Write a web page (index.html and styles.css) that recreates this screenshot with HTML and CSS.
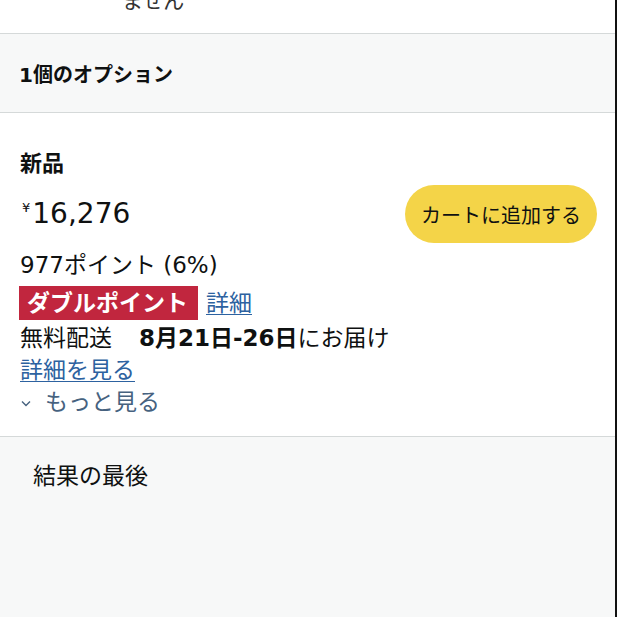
FILE: index.html
```html
<!DOCTYPE html>
<html lang="ja">
  <head>
    <meta charset="UTF-8" />
    <meta name="viewport" content="width=device-width, initial-scale=1.0" />
    <title>1個のオプション</title>
    <link rel="stylesheet" href="styles.css">
  </head>
  <body>
    <div class="page">
      <div class="prev-note">ません</div>

      <div class="options-head">1個のオプション</div>

      <div class="offer">
        <div class="condition">新品</div>
        <div class="price-row">
          <div class="price"><span class="yen">¥</span>16,276</div>
          <button class="cart-btn">カートに追加する</button>
        </div>
        <div class="points">977ポイント (6%)</div>
        <div class="badge-row">
          <span class="badge">ダブルポイント</span>
          <a href="#" class="link">詳細</a>
        </div>
        <div class="delivery">無料配送　<b>8月21日-26日</b>にお届け</div>
        <div class="line"><a href="#" class="link">詳細を見る</a></div>
        <div class="line more">
          <svg class="chev" width="10" height="7" viewBox="0 0 10 7">
            <path d="M1 1.5 L5 5.5 L9 1.5" fill="none" stroke="#46627f" stroke-width="1.4" />
          </svg>
          もっと見る
        </div>
      </div>

      <div class="results-end">結果の最後</div>
    </div>
  </body>
</html>
```

FILE: styles.css
```css
html,
body {
  margin: 0;
  height: 100%;
}
body {
  font-family: "DejaVu Sans", "Noto Sans CJK JP", sans-serif;
  color: #0f1111;
  background: #f7f8f8;
  overflow: hidden;
}
.page {
  display: flex;
  flex-direction: column;
  min-height: 100%;
  border-right: 2px solid #111;
  box-sizing: border-box;
}
.prev-note {
  background: #fff;
  margin-top: -17px;
  padding: 0 0 18px 122px;
  font-family: "Noto Sans CJK JP", sans-serif;
  font-size: 21px;
  line-height: 32px;
  color: #333;
}
.options-head {
  border-top: 1px solid #d5d9d9;
  border-bottom: 1px solid #d5d9d9;
  background: #f7f8f8;
  height: 78px;
  display: flex;
  align-items: center;
  padding-left: 19px;
  font-size: 20px;
  font-weight: 700;
}
.offer {
  background: #fff;
  padding: 36px 18px 18px 20px;
  border-bottom: 1px solid #d5d9d9;
  font-size: 23px;
  line-height: 32px;
}
.condition {
  font-weight: 700;
  font-size: 22px;
  line-height: 30px;
}
.price-row {
  margin-top: 6px;
  display: flex;
  align-items: center;
  justify-content: space-between;
}
.price {
  font-size: 28px;
  line-height: 36px;
  padding-left: 2px;
}
.yen {
  font-size: 13px;
  vertical-align: top;
  line-height: 24px;
  margin-right: 2px;
}
.cart-btn {
  width: 192px;
  height: 58px;
  border: none;
  border-radius: 29px;
  background: #f4d448;
  color: #0f1111;
  font-family: "Noto Sans CJK JP", sans-serif;
  font-size: 20px;
  padding: 0;
  cursor: pointer;
}
.points {
  margin-top: 6px;
}
.badge-row {
  margin-top: 5px;
  display: flex;
  align-items: center;
  gap: 8px;
  height: 34px;
}
.badge {
  background: #c1263e;
  color: #fff;
  font-weight: 700;
  font-size: 23px;
  line-height: 34px;
  padding: 0 10px 0 8px;
  margin-left: -1px;
}
.link {
  color: #2d62a0;
  text-decoration: underline;
  text-decoration-thickness: 1px;
  text-underline-offset: 3px;
}
.delivery {
  margin-top: 2px;
}
.delivery b {
  font-weight: 700;
  margin-left: 4px;
}
.more {
  color: #46627f;
  display: flex;
  align-items: center;
  gap: 14px;
}
.chev {
  margin-left: 1px;
  margin-top: 2px;
}
.results-end {
  flex: 1;
  background: #f7f8f8;
  padding: 24px 0 0 33px;
  font-size: 23px;
  line-height: 30px;
}
```
